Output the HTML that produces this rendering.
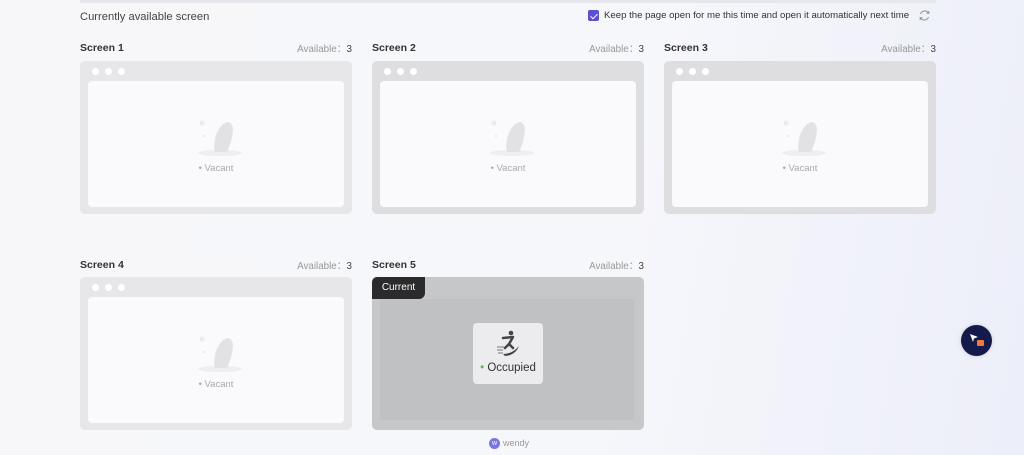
<!DOCTYPE html>
<html><head><meta charset="utf-8"><style>
*{box-sizing:border-box;margin:0;padding:0}
body{width:1024px;height:455px;overflow:hidden;font-family:"Liberation Sans",sans-serif;background:linear-gradient(100deg,#f7f7fa 0%,#f6f7fb 60%,#eceef9 100%);position:relative;color:#333}
.topline{position:absolute;left:80px;top:0;width:856px;height:3px;background:#e6e7ec}
.h{position:absolute;left:80px;top:11px;font-size:11.2px;color:#444}
.chk{position:absolute;left:588px;top:10px;width:11px;height:11px;background:#5b4fd6;border-radius:2px}
.chk:after{content:"";position:absolute;left:3.5px;top:1.5px;width:3px;height:6px;border:solid #fff;border-width:0 1.5px 1.5px 0;transform:rotate(45deg)}
.kl{position:absolute;left:604px;top:10px;font-size:9.6px;color:#333;white-space:nowrap}
.ref{position:absolute;left:918px;top:9px}
.t{position:absolute;font-size:10.5px;font-weight:bold;color:#333}
.a{position:absolute;font-size:9.8px;color:#999;text-align:right;width:120px}
.a b{color:#444;font-weight:normal}
.card{position:absolute;width:272px;height:153px;background:#e7e7ea;border-radius:5px}
.dots{position:absolute;left:12px;top:7px;display:flex;gap:6px}
.dots i{display:block;width:7px;height:7px;border-radius:50%;background:#fff}
.in{position:absolute;left:8px;top:20px;right:8px;bottom:7px;background:#fafafc;border-radius:4px}
.v{position:absolute;left:0;right:0;top:82px;text-align:center;font-size:9.5px;color:#aaa}
.ill{position:absolute;left:0;top:0}
.cur{position:absolute;left:372px;top:277px;width:272px;height:153px;background:#c6c7c9;border-radius:5px}
.cin{position:absolute;left:8px;top:22px;right:10px;bottom:10px;background:#c0c1c3}
.tab{position:absolute;left:0;top:0;width:53px;height:22px;background:#2b2b2d;border-radius:5px 0 6px 0;color:#fff;font-size:10px;line-height:22px;text-align:center}
.occ{position:absolute;left:101px;top:46px;width:70px;height:61px;background:#ececee;border-radius:4px;text-align:center}
.occ span{position:absolute;left:0;right:0;top:39px;font-size:11.5px;color:#333}
.wendy{position:absolute;left:489px;top:438px;font-size:9px;color:#999}
.wendy i{display:inline-block;width:11px;height:11px;border-radius:50%;background:#7a74e0;color:#fff;font-style:normal;font-size:7px;text-align:center;line-height:11px;vertical-align:middle;margin-right:3px}
.fab{position:absolute;left:961px;top:325px;width:31px;height:31px;border-radius:50%;background:#141a4a;box-shadow:0 0 4px rgba(0,0,0,.15)}
</style></head><body>
<div class="topline"></div>
<div class="h">Currently available screen</div>
<div class="chk"></div>
<div class="kl">Keep the page open for me this time and open it automatically next time</div>
<svg class="ref" width="13" height="13" viewBox="0 0 13 13"><path d="M10.5 4A4.5 4.5 0 0 0 2.5 5M2.5 9A4.5 4.5 0 0 0 10.5 8" fill="none" stroke="#999" stroke-width="1.1"/><path d="M10.8 2v2.3H8.5M2.2 11V8.7h2.3" fill="none" stroke="#999" stroke-width="1.1"/></svg>

<div class="t" style="left:80px;top:42px">Screen 1</div><div class="a" style="left:232px;top:41px">Available：<b>3</b></div>
<div class="t" style="left:372px;top:42px">Screen 2</div><div class="a" style="left:524px;top:41px">Available：<b>3</b></div>
<div class="t" style="left:664px;top:42px">Screen 3</div><div class="a" style="left:816px;top:41px">Available：<b>3</b></div>
<div class="t" style="left:80px;top:259px">Screen 4</div><div class="a" style="left:232px;top:258px">Available：<b>3</b></div>
<div class="t" style="left:372px;top:259px">Screen 5</div><div class="a" style="left:524px;top:258px">Available：<b>3</b></div>

<div class="card" style="left:80px;top:61px"><div class="dots"><i></i><i></i><i></i></div><div class="in"><svg class="ill" width="256" height="100"><ellipse cx="132" cy="72" rx="22" ry="3" fill="#eeeef0"/><path d="M127 71C124 60 130 43 140 41C148 42 145 58 139 71Z" fill="#e2e2e5"/><circle cx="114" cy="42" r="2.5" fill="#ececef"/><circle cx="116" cy="55" r="1" fill="#e5e5e8"/></svg><div class="v">• Vacant</div></div></div>
<div class="card" style="left:372px;top:61px;background:#dedee1"><div class="dots"><i></i><i></i><i></i></div><div class="in"><svg class="ill" width="256" height="100"><ellipse cx="132" cy="72" rx="22" ry="3" fill="#eeeef0"/><path d="M127 71C124 60 130 43 140 41C148 42 145 58 139 71Z" fill="#e2e2e5"/><circle cx="114" cy="42" r="2.5" fill="#ececef"/><circle cx="116" cy="55" r="1" fill="#e5e5e8"/></svg><div class="v">• Vacant</div></div></div>
<div class="card" style="left:664px;top:61px;background:#dedee1"><div class="dots"><i></i><i></i><i></i></div><div class="in"><svg class="ill" width="256" height="100"><ellipse cx="132" cy="72" rx="22" ry="3" fill="#eeeef0"/><path d="M127 71C124 60 130 43 140 41C148 42 145 58 139 71Z" fill="#e2e2e5"/><circle cx="114" cy="42" r="2.5" fill="#ececef"/><circle cx="116" cy="55" r="1" fill="#e5e5e8"/></svg><div class="v">• Vacant</div></div></div>
<div class="card" style="left:80px;top:277px"><div class="dots"><i></i><i></i><i></i></div><div class="in"><svg class="ill" width="256" height="100"><ellipse cx="132" cy="72" rx="22" ry="3" fill="#eeeef0"/><path d="M127 71C124 60 130 43 140 41C148 42 145 58 139 71Z" fill="#e2e2e5"/><circle cx="114" cy="42" r="2.5" fill="#ececef"/><circle cx="116" cy="55" r="1" fill="#e5e5e8"/></svg><div class="v">• Vacant</div></div></div>

<div class="cur"><div class="cin"></div><div class="tab">Current</div>
<div class="occ"><svg style="position:absolute;left:22px;top:7px" width="26" height="28" viewBox="0 0 26 28"><circle cx="16" cy="3" r="2.3" fill="#444"/><path d="M8 8L18 7L14 14L18 18" fill="none" stroke="#444" stroke-width="2.5" stroke-linecap="round" stroke-linejoin="round"/><path d="M14 14L10 18" stroke="#444" stroke-width="2.5" stroke-linecap="round"/><path d="M8 24C14 24 20 21 24 16C22 22 16 26 10 26Z" fill="#444"/><path d="M2 17h7M2 20h6M3 23h5" stroke="#777" stroke-width="1"/></svg><span><b style="color:#5cb85c;font-weight:normal">•</b> Occupied</span></div>
</div>
<div class="wendy"><i>w</i>wendy</div>
<div class="fab"><svg width="31" height="31" viewBox="0 0 31 31"><path d="M9 9L17 12L13 13.5L12 17Z" fill="#fff"/><rect x="16" y="15" width="7" height="6" rx="1" fill="#f07a3a"/></svg></div>
</body></html>
